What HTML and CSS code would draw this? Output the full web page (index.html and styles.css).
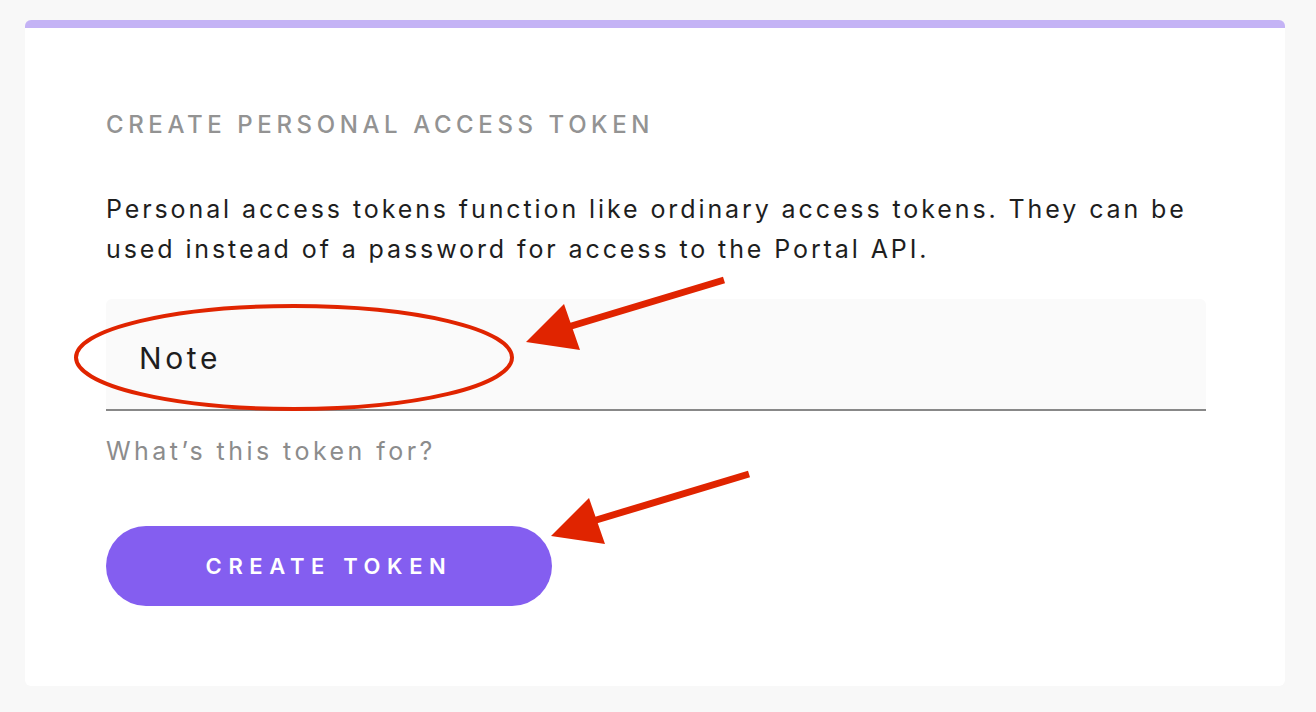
FILE: index.html
```html
<!DOCTYPE html>
<html lang="en">
<head>
<meta charset="utf-8">
<title>Create personal access token</title>
<link rel="stylesheet" href="styles.css">
</head>
<body>
<main class="card">
  <h2 class="card-title">CREATE PERSONAL ACCESS TOKEN</h2>
  <p class="card-text">Personal access tokens function like ordinary access tokens. They can be used instead of a password for access to the Portal API.</p>
  <div class="field">
    <div class="field-input">Note</div>
  </div>
  <p class="field-help">What’s this token for?</p>
  <button class="btn-primary" type="button">CREATE TOKEN</button>
</main>
<svg class="annotations" width="1316" height="712" viewBox="0 0 1316 712" aria-hidden="true">
  <ellipse cx="294" cy="357.5" rx="218" ry="51.5" fill="none" stroke="#e02400" stroke-width="4"/>
  <g fill="#e02400">
    <g>
      <line x1="724" y1="280" x2="568" y2="327" stroke="#e02400" stroke-width="7"/>
      <polygon points="526,342 564,304 580,350"/>
    </g>
    <g transform="translate(25 194)">
      <line x1="724" y1="280" x2="568" y2="327" stroke="#e02400" stroke-width="7"/>
      <polygon points="526,342 564,304 580,350"/>
    </g>
  </g>
</svg>
</body>
</html>
```

FILE: styles.css
```css
html, body {
  margin: 0;
  padding: 0;
}
body {
  background: #f8f8f8;
  font-family: Inter, Lato, "Liberation Sans", sans-serif;
  width: 1316px;
  height: 712px;
  overflow: hidden;
  position: relative;
}
.card {
  box-sizing: border-box;
  margin: 20px 31px 0 25px;
  height: 666px;
  background: #fff;
  border-top: 8px solid #c4b3f5;
  border-radius: 6px;
  padding: 83px 60px 0 81px;
}
.card-title {
  margin: 0;
  font-size: 24px;
  line-height: 28px;
  font-weight: 500;
  letter-spacing: 4.6px;
  color: #939393;
}
.card-text {
  margin: 50px 0 0;
  font-size: 25px;
  line-height: 40px;
  letter-spacing: 2.9px;
  color: #1e1e1e;
}
.field {
  margin-top: 30px;
  width: 1100px;
  background: #fafafa;
  border-radius: 6px 6px 0 0;
  border-bottom: 2px solid #888;
  height: 112px;
  display: flex;
  align-items: center;
  padding-left: 33px;
  box-sizing: border-box;
}
.field-input {
  font-size: 30px;
  letter-spacing: 3.6px;
  color: #1e1e1e;
  padding-top: 7px;
}
.field-help {
  margin: 24px 0 0;
  font-size: 25px;
  line-height: 32px;
  letter-spacing: 3.45px;
  color: #8c8c8c;
}
.btn-primary {
  margin-top: 59px;
  width: 446px;
  height: 80px;
  border: none;
  border-radius: 40px;
  background: #845ef0;
  color: #fff;
  font-family: inherit;
  font-size: 22px;
  font-weight: 600;
  letter-spacing: 6.6px;
  padding: 0;
  cursor: pointer;
}
.annotations {
  position: absolute;
  left: 0;
  top: 0;
  pointer-events: none;
}
```
